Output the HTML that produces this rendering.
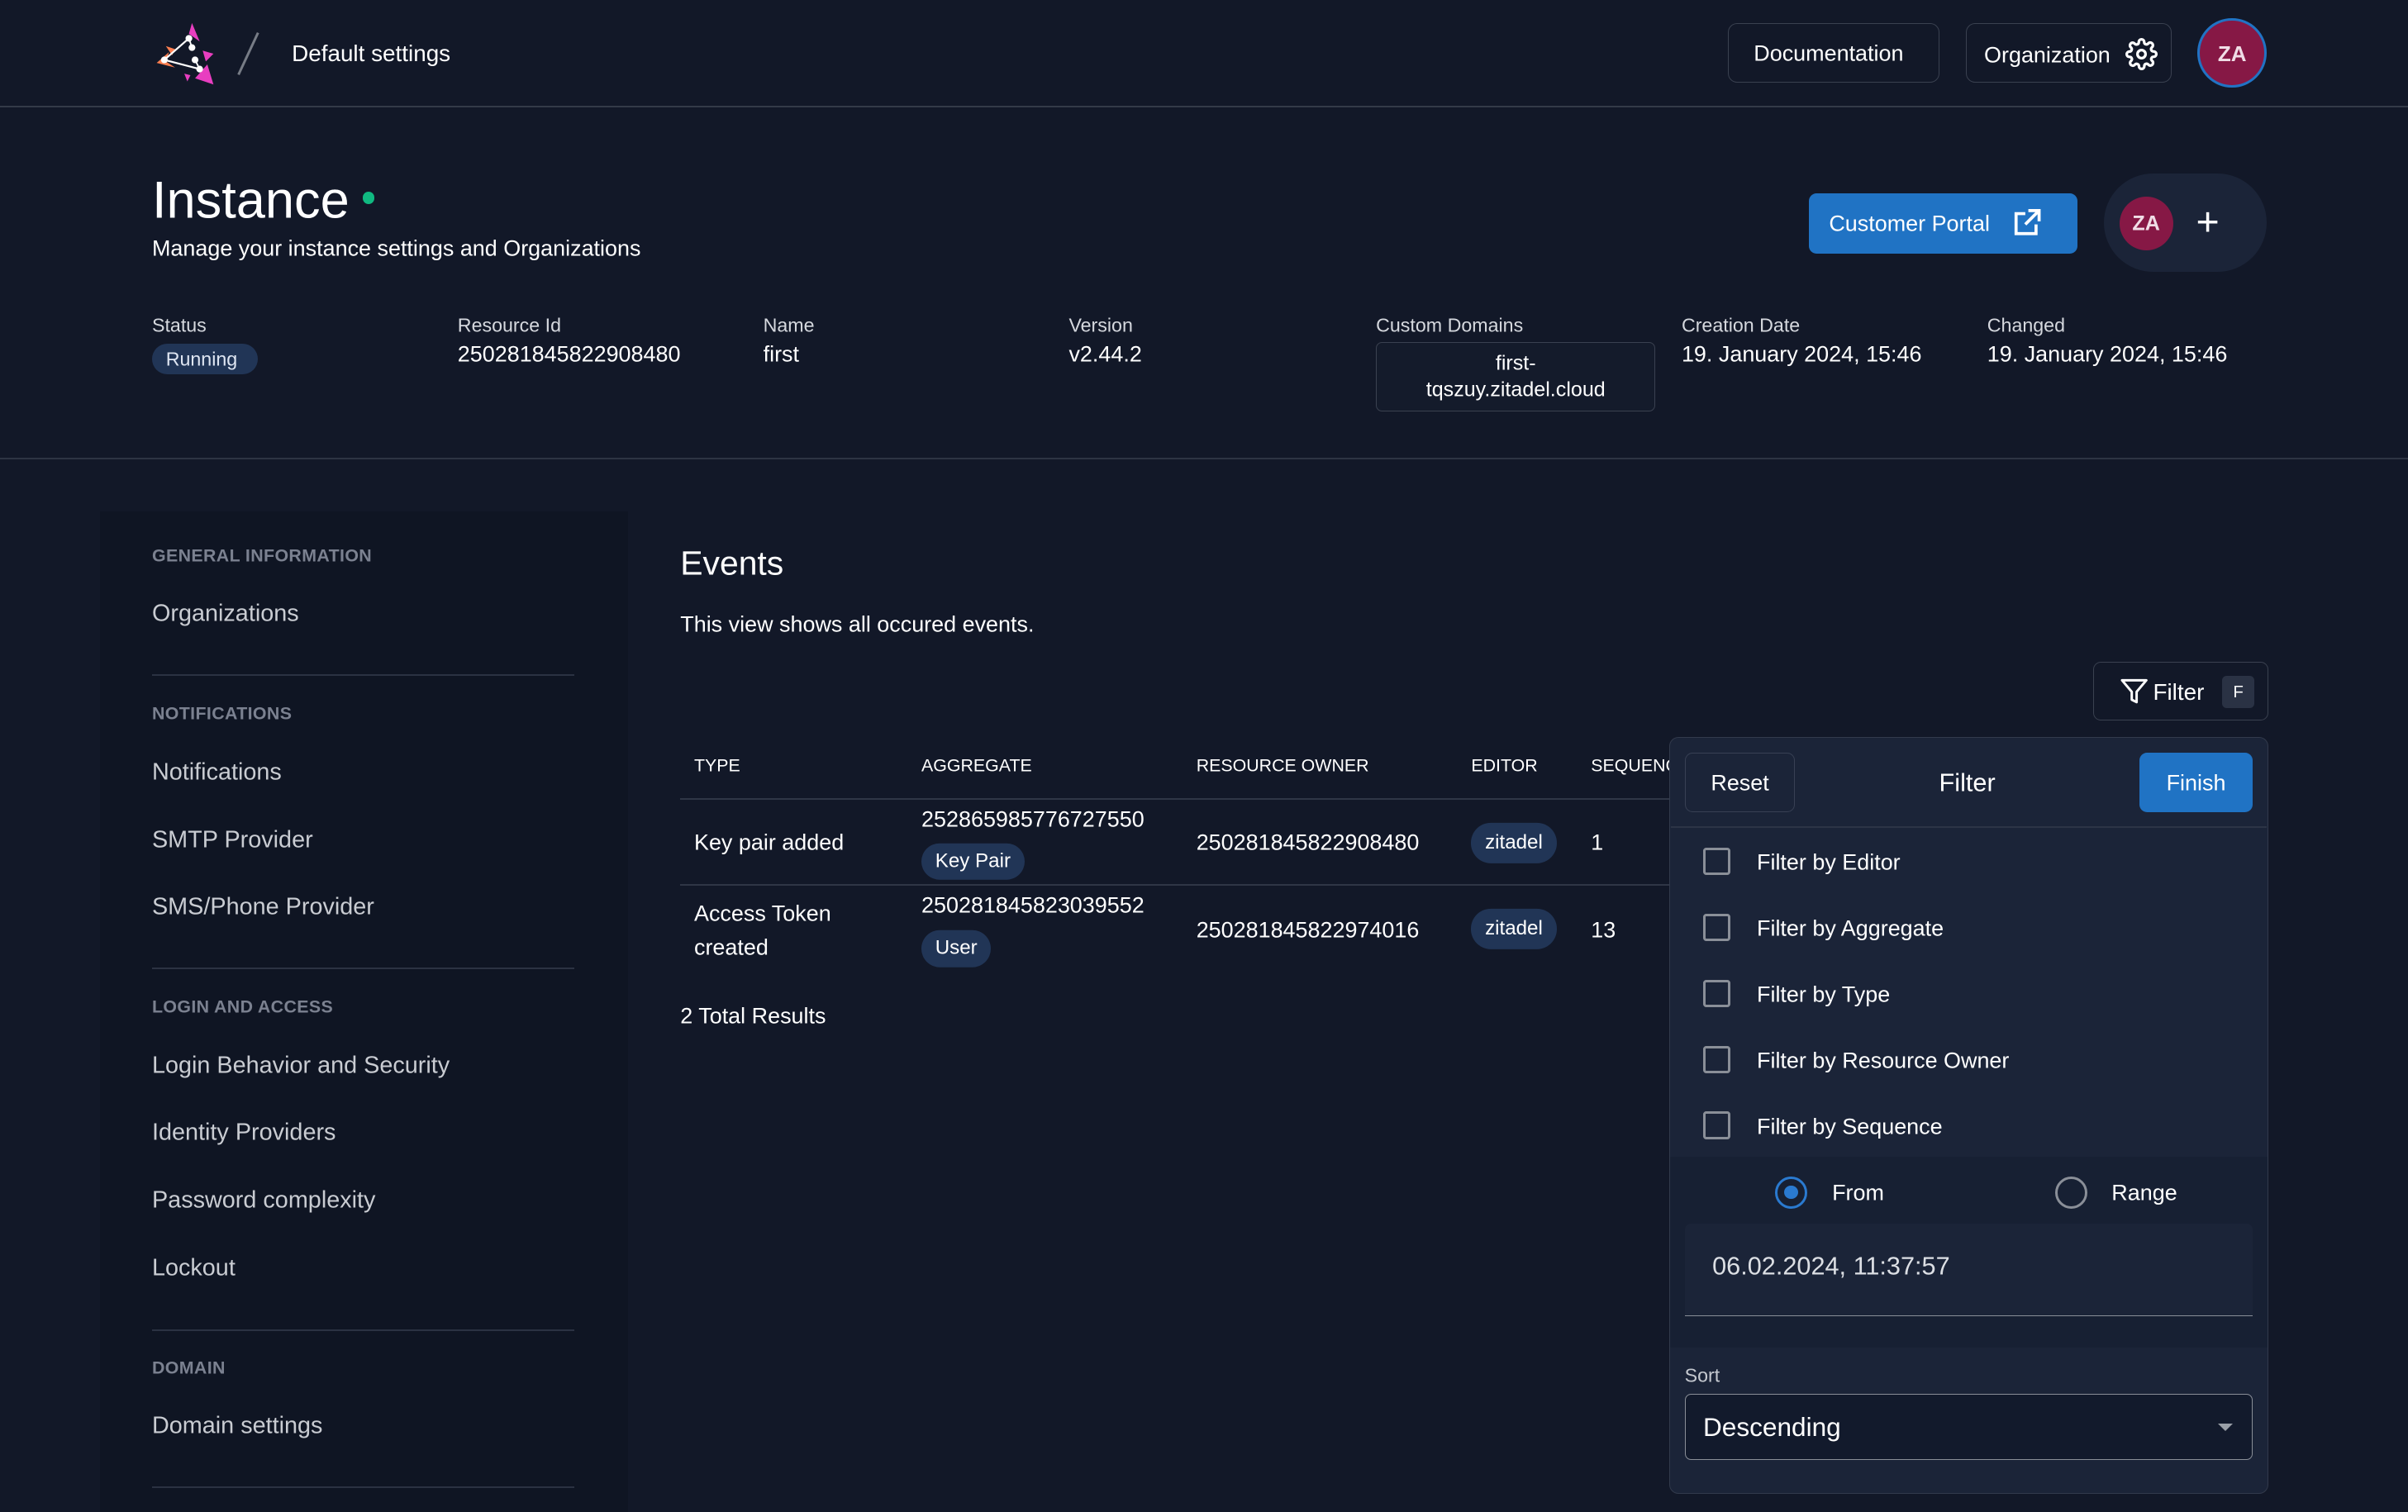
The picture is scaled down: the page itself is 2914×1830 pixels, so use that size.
<!DOCTYPE html>
<html><head><meta charset="utf-8"><style>
html,body{margin:0;padding:0;background:#121828;overflow:hidden;}
body{width:2914px;height:1830px;}
#w{zoom:1.8584;width:1568px;height:985px;position:relative;font-family:"Liberation Sans",sans-serif;color:#fff;background:#121828;}
.t{position:absolute;transform:translateY(-50%);line-height:1;white-space:nowrap;}
.a{position:absolute;box-sizing:border-box;}
.lbl{font-size:12.5px;color:#d5d8de;}
.val{font-size:14.5px;}
.sh{font-size:11.5px;color:#7b8190;letter-spacing:.2px;font-weight:bold;}
.si{font-size:15.5px;color:#c9ccd2;}
.hd{font-size:11.5px;}
.td{font-size:14.5px;}
.chip{position:absolute;background:#213556;border-radius:12px;font-size:13px;line-height:24px;height:24px;padding:0 9px;transform:translateY(-50%);white-space:nowrap;}
.cb{position:absolute;left:1109px;width:18px;height:18px;border:2px solid #8a8f98;border-radius:2px;box-sizing:border-box;}
.fl{font-size:14.5px;left:1144px;}
</style></head><body><div id="w">
<!-- header -->
<svg class="a" style="left:99px;top:14px" width="44" height="42" viewBox="0 0 44 42">
<polygon points="26,1 31,13 24,8" fill="#e83ec0"/>
<polygon points="3,27 11,20 9,26 15,30" fill="#ff7f50"/>
<polygon points="33,19 40,21 35,26" fill="#e83ec0"/>
<polygon points="36,28 40,41 28,37" fill="#e83ec0"/>
<polygon points="9,16 15,18 13,22" fill="#ff7f50"/>
<polygon points="21,34 25,35 23,39" fill="#e83ec0"/>
<line x1="8" y1="25" x2="24" y2="11" stroke="#fff" stroke-width="1.2"/><line x1="8" y1="25" x2="31" y2="31" stroke="#fff" stroke-width="1.2"/><line x1="24" y1="11" x2="26" y2="17" stroke="#fff" stroke-width="1"/><line x1="28" y1="25" x2="31" y2="31" stroke="#fff" stroke-width="1"/>
<circle cx="8" cy="25" r="2.2" fill="#fff"/><circle cx="24" cy="11" r="2.2" fill="#fff"/><circle cx="26" cy="17" r="2.2" fill="#fff"/><circle cx="28" cy="25" r="2.2" fill="#fff"/><circle cx="31" cy="31" r="2.2" fill="#fff"/>
</svg>
<div class="a" style="left:161px;top:20px;width:1.5px;height:30px;background:#777c86;transform:rotate(25deg)"></div>
<div class="t" style="left:190px;top:35px;font-size:15px">Default settings</div>
<div class="a" style="left:1125px;top:15px;width:138px;height:39px;border:1px solid #3a4150;border-radius:6px"></div>
<div class="t" style="left:1142px;top:35px;font-size:14.5px">Documentation</div>
<div class="a" style="left:1280px;top:15px;width:134px;height:39px;border:1px solid #3a4150;border-radius:6px"></div>
<div class="t" style="left:1292px;top:36px;font-size:14.5px">Organization</div>
<svg class="a" style="left:1384px;top:25px" width="21" height="21" viewBox="0 0 24 24" fill="none" stroke="#fff" stroke-width="2"><circle cx="12" cy="12" r="3"/><path d="M19.4 15a1.7 1.7 0 0 0 .3 1.8l.1.1a2 2 0 1 1-2.8 2.8l-.1-.1a1.7 1.7 0 0 0-1.8-.3 1.7 1.7 0 0 0-1 1.5V21a2 2 0 1 1-4 0v-.1a1.7 1.7 0 0 0-1.100-1.5 1.7 1.7 0 0 0-1.8.3l-.1.1a2 2 0 1 1-2.8-2.8l.1-.1a1.7 1.7 0 0 0 .3-1.8 1.7 1.7 0 0 0-1.5-1H3a2 2 0 1 1 0-4h.1a1.7 1.7 0 0 0 1.5-1.1 1.7 1.7 0 0 0-.3-1.8l-.1-.1a2 2 0 1 1 2.8-2.8l.1.1a1.7 1.7 0 0 0 1.8.3H9a1.7 1.7 0 0 0 1-1.5V3a2 2 0 1 1 4 0v.1a1.7 1.7 0 0 0 1 1.5 1.7 1.7 0 0 0 1.8-.3l.1-.1a2 2 0 1 1 2.8 2.8l-.1.1a1.7 1.7 0 0 0-.3 1.8V9a1.7 1.7 0 0 0 1.5 1H21a2 2 0 1 1 0 4h-.1a1.7 1.7 0 0 0-1.5 1z"/></svg>
<div class="a" style="left:1431px;top:12px;width:45px;height:45px;border-radius:50%;background:#861845;border:2px solid #2173c4"></div>
<div class="t" style="left:1431px;width:45px;text-align:center;top:35px;font-size:14px;font-weight:bold;color:#f0dde6">ZA</div>
<div class="a" style="left:0;top:69px;width:1568px;height:1px;background:#333a48"></div>
<!-- instance -->
<div class="t" style="left:99px;top:131px;font-size:34px">Instance</div>
<div class="a" style="left:236px;top:125px;width:8px;height:8px;border-radius:50%;background:#10b981"></div>
<div class="t" style="left:99px;top:162px;font-size:14.5px">Manage your instance settings and Organizations</div>
<div class="a" style="left:1178px;top:126px;width:175px;height:39px;background:#2073c4;border-radius:5px"></div>
<div class="t" style="left:1191px;top:146px;font-size:14.5px">Customer Portal</div>
<svg class="a" style="left:1311px;top:136px" width="18" height="18" viewBox="0 0 18 18" fill="none" stroke="#fff" stroke-width="2"><path d="M8 3H2v13h13v-6M10 1h7v7M17 1L8 10"/></svg>
<div class="a" style="left:1370px;top:113px;width:106px;height:64px;background:#1b2438;border-radius:32px"></div>
<div class="a" style="left:1380px;top:128px;width:35px;height:35px;border-radius:50%;background:#861845"></div>
<div class="t" style="left:1380px;width:35px;text-align:center;top:146px;font-size:13.5px;font-weight:bold;color:#f0dde6">ZA</div>
<div class="t" style="left:1430px;top:145px;font-size:26px">+</div>
<!-- info row -->
<div class="t lbl" style="left:99px;top:212px">Status</div>
<div class="a" style="left:99px;top:224px;width:69px;height:20px;background:#213556;border-radius:10px"></div>
<div class="t" style="left:108px;top:234px;font-size:12.5px;color:#dfe6f2">Running</div>
<div class="t lbl" style="left:298px;top:212px">Resource Id</div>
<div class="t val" style="left:298px;top:231px">250281845822908480</div>
<div class="t lbl" style="left:497px;top:212px">Name</div>
<div class="t val" style="left:497px;top:231px">first</div>
<div class="t lbl" style="left:696px;top:212px">Version</div>
<div class="t val" style="left:696px;top:231px">v2.44.2</div>
<div class="t lbl" style="left:896px;top:212px">Custom Domains</div>
<div class="a" style="left:896px;top:223px;width:182px;height:45px;border:1px solid #3a4150;border-radius:4px;background:#141b2b"></div>
<div class="t" style="left:896px;width:182px;text-align:center;top:237px;font-size:13.5px">first-</div>
<div class="t" style="left:896px;width:182px;text-align:center;top:254px;font-size:13.5px">tqszuy.zitadel.cloud</div>
<div class="t lbl" style="left:1095px;top:212px">Creation Date</div>
<div class="t val" style="left:1095px;top:231px">19. January 2024, 15:46</div>
<div class="t lbl" style="left:1294px;top:212px">Changed</div>
<div class="t val" style="left:1294px;top:231px">19. January 2024, 15:46</div>
<div class="a" style="left:0;top:298px;width:1568px;height:1px;background:#2d3443"></div>
<!-- sidebar -->
<div class="a" style="left:65px;top:333px;width:344px;height:660px;background:#0f1523"></div>
<div class="t sh" style="left:99px;top:362px">GENERAL INFORMATION</div>
<div class="t si" style="left:99px;top:400px">Organizations</div>
<div class="a" style="left:99px;top:439px;width:275px;height:1px;background:#2b3242"></div>
<div class="t sh" style="left:99px;top:465px">NOTIFICATIONS</div>
<div class="t si" style="left:99px;top:503px">Notifications</div>
<div class="t si" style="left:99px;top:547px">SMTP Provider</div>
<div class="t si" style="left:99px;top:591px">SMS/Phone Provider</div>
<div class="a" style="left:99px;top:630px;width:275px;height:1px;background:#2b3242"></div>
<div class="t sh" style="left:99px;top:656px">LOGIN AND ACCESS</div>
<div class="t si" style="left:99px;top:694px">Login Behavior and Security</div>
<div class="t si" style="left:99px;top:738px">Identity Providers</div>
<div class="t si" style="left:99px;top:782px">Password complexity</div>
<div class="t si" style="left:99px;top:826px">Lockout</div>
<div class="a" style="left:99px;top:866px;width:275px;height:1px;background:#2b3242"></div>
<div class="t sh" style="left:99px;top:891px">DOMAIN</div>
<div class="t si" style="left:99px;top:929px">Domain settings</div>
<div class="a" style="left:99px;top:968px;width:275px;height:1px;background:#2b3242"></div>
<!-- events -->
<div class="t" style="left:443px;top:367px;font-size:22px">Events</div>
<div class="t" style="left:443px;top:407px;font-size:14.5px">This view shows all occured events.</div>
<div class="a" style="left:1363px;top:431px;width:114px;height:38px;border:1px solid #3a4150;border-radius:5px"></div>
<svg class="a" style="left:1380px;top:440px" width="19" height="20" viewBox="0 0 24 24" fill="none" stroke="#fff" stroke-width="2" stroke-linejoin="round"><path d="M22 3H2l8 9.5V19l4 2v-8.5L22 3z"/></svg>
<div class="t" style="left:1402px;top:451px;font-size:15px">Filter</div>
<div class="a" style="left:1447px;top:440px;width:21px;height:21px;background:#2a3244;border-radius:3px"></div>
<div class="t" style="left:1447px;width:21px;text-align:center;top:451px;font-size:11px">F</div>
<div style="position:absolute;left:443px;top:470px;width:644px;height:230px;overflow:hidden">
<div style="position:relative;left:-443px;top:-470px">
<div class="t hd" style="left:452px;top:499px">TYPE</div>
<div class="t hd" style="left:600px;top:499px">AGGREGATE</div>
<div class="t hd" style="left:779px;top:499px">RESOURCE OWNER</div>
<div class="t hd" style="left:958px;top:499px">EDITOR</div>
<div class="t hd" style="left:1036px;top:499px">SEQUENCE</div>
<div class="a" style="left:443px;top:520px;width:700px;height:1px;background:#2f3646"></div>
<div class="t td" style="left:452px;top:549px">Key pair added</div>
<div class="t td" style="left:600px;top:534px">252865985776727550</div>
<div class="chip" style="left:600px;top:561px">Key Pair</div>
<div class="t td" style="left:779px;top:549px">250281845822908480</div>
<div class="chip" style="left:958px;top:549px;height:26px;line-height:26px;border-radius:13px">zitadel</div>
<div class="t td" style="left:1036px;top:549px">1</div>
<div class="a" style="left:443px;top:576px;width:700px;height:1px;background:#2f3646"></div>
<div class="t td" style="left:452px;top:595px">Access Token</div>
<div class="t td" style="left:452px;top:617px">created</div>
<div class="t td" style="left:600px;top:590px">250281845823039552</div>
<div class="chip" style="left:600px;top:618px">User</div>
<div class="t td" style="left:779px;top:606px">250281845822974016</div>
<div class="chip" style="left:958px;top:605px;height:26px;line-height:26px;border-radius:13px">zitadel</div>
<div class="t td" style="left:1036px;top:606px">13</div>
<div class="t td" style="left:443px;top:662px">2 Total Results</div>
</div></div>
<!-- filter panel -->
<div class="a" style="left:1087px;top:480px;width:390px;height:493px;background:#1b2438;border:1px solid #323a4c;border-radius:6px;overflow:hidden">
<div class="a" style="left:0;top:273px;width:390px;height:124px;background:#172033"></div>
</div>
<div class="a" style="left:1088px;top:538px;width:388px;height:1px;background:#2c3446"></div>
<div class="a" style="left:1097px;top:490px;width:72px;height:39px;border:1px solid #384054;border-radius:5px"></div>
<div class="t" style="left:1097px;width:72px;text-align:center;top:510px;font-size:14.5px">Reset</div>
<div class="t" style="left:1230px;width:102px;text-align:center;top:510px;font-size:16.5px">Filter</div>
<div class="a" style="left:1393px;top:490px;width:74px;height:39px;background:#2073c4;border-radius:5px"></div>
<div class="t" style="left:1393px;width:74px;text-align:center;top:510px;font-size:14.5px">Finish</div>
<div class="cb" style="top:552px"></div><div class="t fl" style="top:562px">Filter by Editor</div>
<div class="cb" style="top:595px"></div><div class="t fl" style="top:605px">Filter by Aggregate</div>
<div class="cb" style="top:638px"></div><div class="t fl" style="top:648px">Filter by Type</div>
<div class="cb" style="top:681px"></div><div class="t fl" style="top:691px">Filter by Resource Owner</div>
<div class="cb" style="top:724px"></div><div class="t fl" style="top:734px">Filter by Sequence</div>
<div class="a" style="left:1156px;top:766px;width:21px;height:21px;border:2px solid #2a7ad0;border-radius:50%"></div>
<div class="a" style="left:1162px;top:772px;width:9px;height:9px;background:#2a7ad0;border-radius:50%"></div>
<div class="t fl" style="left:1193px;top:777px">From</div>
<div class="a" style="left:1338px;top:766px;width:21px;height:21px;border:2px solid #8a8f98;border-radius:50%"></div>
<div class="t fl" style="left:1375px;top:777px">Range</div>
<div class="a" style="left:1097px;top:797px;width:370px;height:60px;background:#1b2438;border-bottom:1px solid #8a8f98;border-radius:4px 4px 0 0"></div>
<div class="t" style="left:1115px;top:825px;font-size:16.5px;color:#dcdfe4">06.02.2024, 11:37:57</div>
<div class="t" style="left:1097px;top:896px;font-size:12.5px;color:#c5c9d0">Sort</div>
<div class="a" style="left:1097px;top:908px;width:370px;height:43px;border:1px solid #8a8f98;border-radius:4px;background:#121a2c"></div>
<div class="t" style="left:1109px;top:930px;font-size:17px">Descending</div>
<div class="a" style="left:1444px;top:927px;width:0;height:0;border-left:5px solid transparent;border-right:5px solid transparent;border-top:5px solid #9aa0a8"></div>
</div></body></html>
